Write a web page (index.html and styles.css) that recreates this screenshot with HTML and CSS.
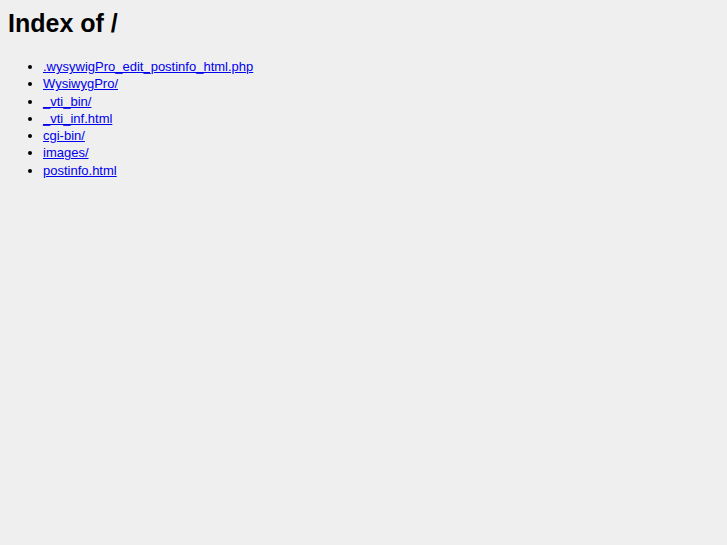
FILE: index.html
```html
<!DOCTYPE html>
<html>
<head>
    <meta charset="UTF-8">
    <title>Index of /</title>
    <link rel="stylesheet" href="styles.css">
</head>
<body>
    <h1>Index of /</h1>
    <ul>
        <li><a href="#">.wysywigPro_edit_postinfo_html.php</a></li>
        <li><a href="#">WysiwygPro/</a></li>
        <li><a href="#">_vti_bin/</a></li>
        <li><a href="#">_vti_inf.html</a></li>
        <li><a href="#">cgi-bin/</a></li>
        <li><a href="#">images/</a></li>
        <li><a href="#">postinfo.html</a></li>
    </ul>
</body>
</html>
```

FILE: styles.css
```css
body {
    font-family: "Liberation Sans", Arial, sans-serif;
    background-color: #efefef;
    color: #000;
    margin: 8px;
    font-size: 13px;
}

h1 {
    font-size: 25px;
    margin: 1px 0 20px;
}

ul {
    padding-left: 35px;
}

li {
    line-height: 17.3px;
}

a {
    color: #0000ee;
}
```
